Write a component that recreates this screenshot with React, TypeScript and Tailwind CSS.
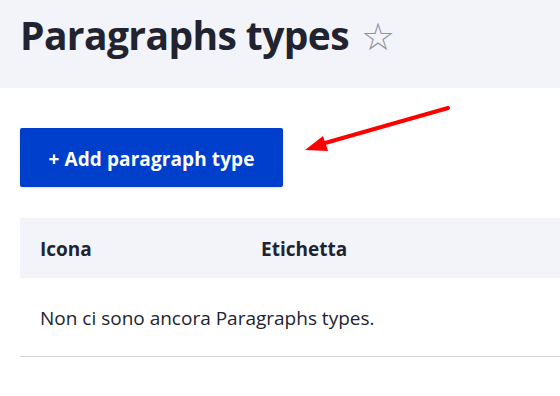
const font = { fontFamily: '"Open Sans", "Noto Sans", Arial, sans-serif' };

const Arrow = () => (
  <svg
    className="absolute left-0 top-0 pointer-events-none"
    width="560"
    height="396"
    viewBox="0 0 560 396"
  >
    <line x1="448" y1="108" x2="318" y2="145" stroke="#ff0000" strokeWidth="4" strokeLinecap="round" />
    <polygon points="305,150 323,136 328,151" fill="#ff0000" />
  </svg>
);

export default function App() {
  return (
    <div className="relative w-[560px] h-[396px] overflow-hidden bg-white text-[#222330]" style={font}>
      {/* Header */}
      <div className="h-[88px] bg-[#f3f4f9] flex items-start pl-5 pt-[9px]">
        <h1 className="text-[39px] leading-[52px] font-bold tracking-[-0.6px]">Paragraphs types</h1>
        <span className="ml-[12px] mt-[2px] text-[38px] leading-[48px] text-[#8e929c]">☆</span>
      </div>

      {/* Add button */}
      <div className="px-5 pt-10">
        <button className="w-[263px] h-[59px] pt-[4px] bg-[#003ecc] rounded-[2px] text-white text-[19px] font-bold tracking-[0.1px] shadow-sm">
          + Add paragraph type
        </button>
      </div>

      {/* Table */}
      <div className="ml-5 mt-[31px]">
        <div className="h-[60px] bg-[#f3f4f9] flex items-center pt-[2px] text-[19px] font-bold">
          <div className="w-[241px] pl-5">Icona</div>
          <div>Etichetta</div>
        </div>
        <div className="h-[79px] flex items-center pl-5 pt-[3px] text-[19px] border-b border-[#d3d4d9]">
          Non ci sono ancora Paragraphs types.
        </div>
      </div>

      <Arrow />
    </div>
  );
}
